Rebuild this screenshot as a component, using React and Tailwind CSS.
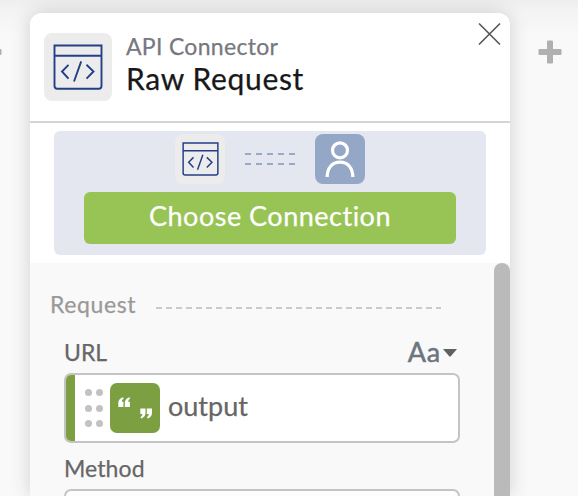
import React from "react";

function CodeWindow({ className, strokeWidth }) {
  return (
    <svg className={className} viewBox="0 0 50 46" fill="none" stroke="#233f87" strokeWidth={strokeWidth}>
      <path d="M1.5 1.5H48.5V42Q48.5 44.7 45.8 44.7H4.2Q1.5 44.7 1.5 42ZM1.5 11.8H48.5" />
      <path d="M15.5 20.8L9 27.5L15.5 34.6M33.5 20.8L40.5 27.5L33.5 34.6M28.2 17.4L21 37.5" />
    </svg>
  );
}

function Plus({ className }) {
  return (
    <svg className={className} viewBox="0 0 24 24" fill="#b0b0b0">
      <rect x="9" y="0.5" width="6" height="23" rx="1.2" />
      <rect x="0.5" y="9" width="23" height="6" rx="1.2" />
    </svg>
  );
}

function DashedLine() {
  return <div className="h-[2px] bg-[repeating-linear-gradient(90deg,#9aa9c8_0_6px,transparent_6px_11px)]" />;
}

function Header() {
  return (
    <header className="flex h-[110px] shrink-0 items-start border-b-2 border-[#d5d5d9] bg-white pl-[14px] pr-[9px]">
      <div className="mt-[20px] flex size-[68px] shrink-0 items-center justify-center rounded-[8px] bg-[#ececec]">
        <CodeWindow className="h-[46px] w-[50px]" strokeWidth={1.9} />
      </div>
      <div className="ml-[14px] flex flex-1 flex-col whitespace-nowrap pt-[19px]">
        <span className="h-[28px] text-[23px] leading-[28px] tracking-[0.3px] text-[#777780]">API Connector</span>
        <span className="h-[36px] text-[30px] leading-[36px] tracking-[0.65px] text-[#18181b]">Raw Request</span>
      </div>
      <svg className="mt-[9px] size-[24px]" viewBox="0 0 24 24" stroke="#555" strokeWidth="1.6">
        <path d="M2 1.5L23 22.5M23 1.5L2 22.5" />
      </svg>
    </header>
  );
}

function Connection() {
  return (
    <section className="h-[140px] shrink-0 bg-white px-6 pt-2">
      <div className="h-[124px] rounded-[6px] bg-[#e4e7ef] px-[30px] pt-[3px]">
        <div className="flex items-center pl-[91px]">
          <div className="flex size-[50px] items-center justify-center rounded-[8px] bg-[#ececec]">
            <CodeWindow className="h-[34px] w-[37px]" strokeWidth={2} />
          </div>
          <div className="ml-[20px] flex w-[51px] flex-col gap-[8px]">
            <DashedLine />
            <DashedLine />
          </div>
          <div className="ml-[19px] size-[50px] rounded-[8px] bg-[#95a7c6]">
            <svg viewBox="0 0 50 50" fill="none" stroke="white" strokeWidth="3.2">
              <circle cx="25" cy="16.3" r="7.5" />
              <path d="M12.2 43C12.2 34 17 28.2 25 28.2S37.8 34 37.8 43" />
            </svg>
          </div>
        </div>
        <button className="mt-[8px] block h-[52px] w-full whitespace-nowrap rounded-[6px] bg-[#98c456] pb-[3px] text-[27px] tracking-[0.5px] text-white">
          Choose Connection
        </button>
      </div>
    </section>
  );
}

function StringPill() {
  return (
    <div className="flex size-[50px] items-center justify-center rounded-[7px] bg-[#7c9f42]">
      <svg className="size-[50px]" viewBox="0 0 50 50" fill="white">
        <path d="M12.8 14.2L13.8 15.3Q11.8 17 11.7 18.7H13.4V24H8.3V19.4Q8.4 16.2 12.8 14.2ZM19.3 14.2L20.2 15.3Q18.2 17 18.1 18.7H19.9V24H14.8V19.4Q14.9 16.2 19.3 14.2Z" />
        <path d="M31.4 35.5L30.4 34.3Q32.3 32.7 32.4 31H30.3V25.6H35.5V30.3Q35.4 33.5 31.4 35.5ZM37.9 35.5L36.9 34.3Q38.8 32.7 38.9 31H36.8V25.6H42V30.3Q41.9 33.5 37.9 35.5Z" />
      </svg>
    </div>
  );
}

function DragHandle() {
  return (
    <div className="grid grid-cols-2 gap-x-[4px] gap-y-[8.5px]">
      {[0, 1, 2, 3, 4, 5].map((i) => (
        <i key={i} className="size-[7px] rounded-full bg-[#c2c2c2]" />
      ))}
    </div>
  );
}

function Fields() {
  return (
    <section className="flex min-h-0 flex-1 overflow-hidden bg-[#f9f9f9]">
      <div className="flex w-[464px] shrink-0 flex-col pl-[20px] pr-[34px]">
        <div className="mt-[27px] flex h-[28px] shrink-0 items-center">
          <span className="w-[106px] text-[23px] leading-[28px] tracking-[0.6px] text-[#999]">Request</span>
          <div className="mt-[7px] h-[2px] w-[285px] bg-[repeating-linear-gradient(90deg,#cacaca_0_6px,transparent_6px_10px)]" />
        </div>
        <div className="mt-[20px] flex h-[28px] shrink-0 items-center justify-between pl-[14px] text-[#666]">
          <span className="text-[23px] leading-[28px]">URL</span>
          <div className="mr-[3px] flex items-center">
            <span className="text-[27px] leading-[28px] tracking-[0.8px] text-[#6c757e] [-webkit-text-stroke:0.5px]">Aa</span>
            <svg className="ml-[2px] mt-[2px] h-[8px] w-[14px]" viewBox="0 0 14 8" fill="#606060">
              <path d="M0 0H14L8 7Q7 8 6 7Z" />
            </svg>
          </div>
        </div>
        <div className="ml-[14px] mt-[7px] flex h-[70px] w-[396px] shrink-0 items-center overflow-hidden rounded-[7px] border-2 border-[#c4c4c4] bg-white">
          <div className="mr-[10px] h-full w-[9px] bg-[#7c9f42]" />
          <DragHandle />
          <div className="ml-[7px]">
            <StringPill />
          </div>
          <span className="ml-[8px] pb-[3px] text-[27px] text-[#666]">output</span>
        </div>
        <span className="ml-[14px] mt-[11px] h-[28px] shrink-0 text-[23px] leading-[28px] tracking-[0.1px] text-[#666]">Method</span>
        <div className="ml-[14px] mt-[7px] h-[70px] w-[396px] shrink-0 rounded-[7px] border-2 border-[#c4c4c4] bg-[#fdfdfd]" />
      </div>
      <div className="w-[16px] shrink-0 rounded-t-full bg-[#bababa]" />
    </section>
  );
}

export default function App() {
  return (
    <main className="flex h-[496px] w-[578px] overflow-hidden bg-[#f9f9f9] bg-[linear-gradient(180deg,#eeeeee_0,#f4f4f4_12px,#f9f9f9_36px)] font-['Lato','Liberation_Sans',sans-serif] [-webkit-text-stroke:0.25px]">
      <div className="flex w-[30px] shrink-0 pt-[40px]">
        <Plus className="-ml-[22px] size-[24px]" />
      </div>
      <div className="mt-[13px] flex h-[483px] w-[480px] shrink-0 flex-col overflow-hidden rounded-t-[12px] bg-white shadow-[0_0_20px_rgba(0,0,0,0.17)]">
        <Header />
        <Connection />
        <Fields />
      </div>
      <div className="pl-[28px] pt-[40px]">
        <Plus className="size-[24px]" />
      </div>
    </main>
  );
}
